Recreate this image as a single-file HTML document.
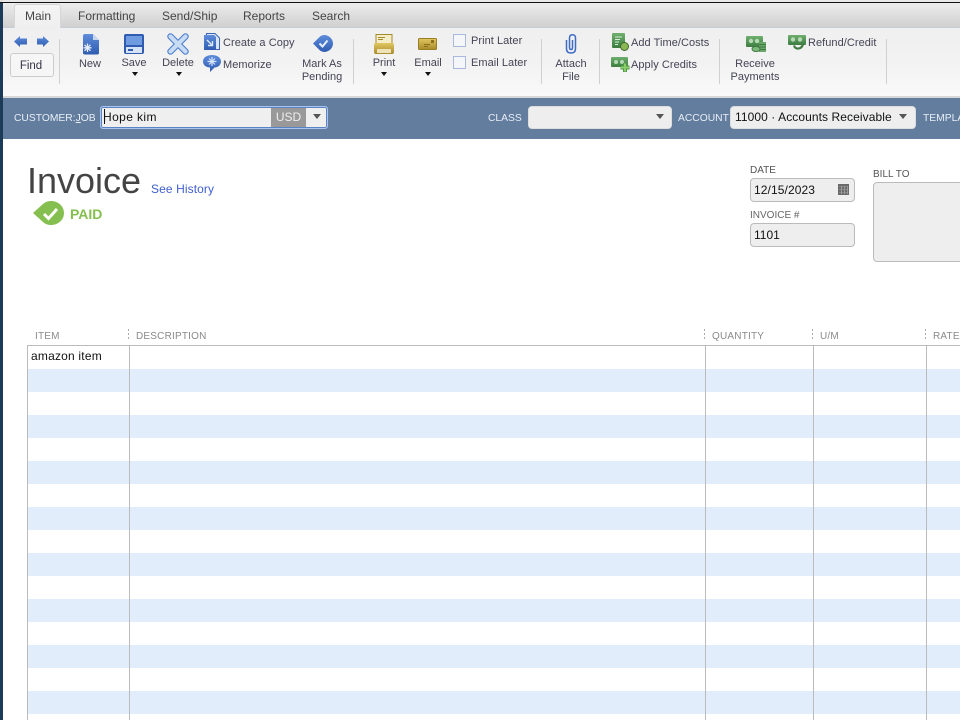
<!DOCTYPE html>
<html><head><meta charset="utf-8"><style>
html,body{margin:0;padding:0;width:960px;height:720px;overflow:hidden;background:#fff;font-family:"Liberation Sans",sans-serif}
#r{position:relative;width:960px;height:720px;overflow:hidden}
.a{position:absolute}
.t{position:absolute;white-space:nowrap;font-size:12px;line-height:14px;color:#445}
.s{font-size:11px;letter-spacing:.05px;color:#445}
.b{font-size:11px;letter-spacing:0;color:#445}
.c{text-align:center}
.tab{position:absolute;top:9px;font-size:12px;line-height:14px;color:#444;white-space:nowrap}
.sep{position:absolute;top:39px;width:1px;height:45px;background:#d0d0d0}
.lbl{position:absolute;top:113px;white-space:nowrap;font-size:10.3px;line-height:12px;color:#e8eef5}
.hd{position:absolute;top:331px;font-size:10px;line-height:12px;color:#8a8a8a;white-space:nowrap;letter-spacing:.2px}
.dots{position:absolute;top:329px;width:1px;height:11px;background:repeating-linear-gradient(#aaa 0 2px,transparent 2px 4px)}
.row{position:absolute;left:28px;width:932px;height:23px;background:#e2edfc}
.col{position:absolute;top:345px;width:1px;height:375px;background:#bbb}
.f{position:absolute;box-sizing:border-box;background:#eee;border:1px solid #bbb;border-radius:4px}
.arr{position:absolute;width:0;height:0;border-left:3px solid transparent;border-right:3px solid transparent;border-top:4px solid #111}
.dd{position:absolute;width:0;height:0;border-left:4px solid transparent;border-right:4px solid transparent;border-top:5px solid #555}
.cb{position:absolute;left:453px;width:11px;height:11px;border:1px solid #aab8dc;background:#f5f6f9}
svg{position:absolute;overflow:visible}
</style></head><body><div id="r">
<svg width="0" height="0" style="left:0;top:0"><defs>
<linearGradient id="bl" x1="0" y1="0" x2="0" y2="1"><stop offset="0" stop-color="#5f8ddb"/><stop offset="1" stop-color="#2f5cb0"/></linearGradient>
<linearGradient id="gr" x1="0" y1="0" x2="0" y2="1"><stop offset="0" stop-color="#6fb06f"/><stop offset="1" stop-color="#3c7c40"/></linearGradient>
<linearGradient id="go" x1="0" y1="0" x2="0" y2="1"><stop offset="0" stop-color="#e2c760"/><stop offset="1" stop-color="#a88a2a"/></linearGradient>
</defs></svg>
<div class="a" style="left:0;top:0;width:960px;height:2px;background:#e8e8e8"></div>
<div class="a" style="left:0;top:2px;width:960px;height:1px;background:#111"></div>
<div class="a" style="left:0;top:3px;width:3px;height:717px;background:#1d3a58"></div>
<div class="a" style="left:0;top:0;width:3px;height:2px;background:#ddd"></div>

<div class="a" style="left:3px;top:3px;width:957px;height:24px;background:linear-gradient(#ececec,#d0d0d0)"></div>
<div class="a" style="left:3px;top:27px;width:957px;height:1px;background:#c3ccd8"></div>
<div class="a" style="left:3px;top:28px;width:957px;height:68px;background:linear-gradient(#efefef,#f3f3f3 60%,#fafafa)"></div>
<div class="a" style="left:3px;top:96px;width:957px;height:2px;background:#d8d8d8"></div>
<div class="a" style="left:14px;top:4px;width:47px;height:24px;box-sizing:border-box;border:1px solid #d6d6d6;border-bottom:0;border-radius:3px 3px 0 0;background:linear-gradient(#f4f4f4,#efefef)"></div>
<div class="tab" style="left:25px">Main</div>
<div class="tab" style="left:78px">Formatting</div>
<div class="tab" style="left:162px">Send/Ship</div>
<div class="tab" style="left:243px">Reports</div>
<div class="tab" style="left:312px">Search</div>

<!-- nav arrows -->
<svg style="left:14px;top:35px" width="14" height="14"><path d="M0 6.500L6 1V3.500H13V9.500H6V12Z" fill="url(#bl)"/></svg>
<svg style="left:36px;top:35px" width="14" height="14"><path d="M13 6.500L7 1V3.500H1V9.500H7V12Z" fill="url(#bl)"/></svg>
<div class="a" style="left:10px;top:53px;width:44px;height:24px;box-sizing:border-box;border:1px solid #ccc;border-radius:3px;background:#f6f6f6"></div>
<div class="t c b" style="left:10px;top:59px;width:42px;font-size:11.5px;color:#334">Find</div>
<div class="sep" style="left:59px"></div>

<!-- New -->
<svg style="left:82px;top:34px" width="18" height="21"><path d="M1 2Q1 0 3 0H11L17 6V19Q17 20.500 15 20.500H3Q1 20.500 1 19Z" fill="url(#bl)"/><path d="M11 0L17 6H11Z" fill="#c6d6f0"/><path d="M5.500 9.500V18M1.500 13.800H9.500M2.500 10.800L8.500 16.800M8.500 10.800L2.500 16.800" stroke="#e4ecfa" stroke-width="1.3"/></svg>
<div class="t c b" style="left:70px;top:57px;width:40px">New</div>
<!-- Save -->
<svg style="left:124px;top:34px" width="20" height="20"><rect x="0" y="0" width="20" height="20" rx="2" fill="#2f5cb0"/><rect x="2" y="2" width="16" height="9" fill="#6f9ce0"/><rect x="2" y="13" width="16" height="6" fill="#d6e3f6"/><rect x="4" y="15" width="5" height="2" fill="#2f5cb0"/></svg>
<div class="t c b" style="left:114px;top:56px;width:40px">Save</div>
<div class="arr" style="left:132px;top:72px"></div>
<!-- Delete -->
<svg style="left:168px;top:34px" width="20" height="20"><path d="M2.500 2.500L17.500 17.500M17.500 2.500L2.500 17.500" stroke="#5080cc" stroke-width="6.500" stroke-linecap="round"/><path d="M2.500 2.500L17.500 17.500M17.500 2.500L2.500 17.500" stroke="#c8dbf5" stroke-width="4.200" stroke-linecap="round"/></svg>
<div class="t c b" style="left:158px;top:56px;width:40px">Delete</div>
<div class="arr" style="left:176px;top:72px"></div>
<!-- Create a copy -->
<svg style="left:204px;top:33px" width="16" height="18"><path d="M2.500 .5H11L15.500 5V16.500H2.500Z" fill="#dbe6f6" stroke="#3a66b4"/><path d="M0 2H10L12 4V17H0Z" fill="url(#bl)"/><path d="M3 7L8 12M8.500 8V12.500H4" stroke="#dce8fa" fill="none" stroke-width="1.400"/></svg>
<div class="t s" style="left:223px;top:36px">Create a Copy</div>
<!-- Memorize -->
<svg style="left:203px;top:55px" width="18" height="18"><path d="M9 0C14 0 18 2.500 18 6.500C18 10 15 12.500 11.500 12.500L7 17V12.500C3 12.500 0 10 0 6.500C0 2.500 4 0 9 0Z" fill="url(#bl)"/><path d="M9 2V11M4.500 6.500H13.500M6 3.500L12 9.500M12 3.500L6 9.500" stroke="#d6e4f8" stroke-width="1.200"/></svg>
<div class="t s" style="left:223px;top:58px">Memorize</div>

<!-- Mark as pending -->
<svg style="left:313px;top:35px" width="20" height="18"><path d="M0 8.500L7 1.500Q9 0 11 0C16 0 20 4 20 8.500C20 13 16 17 11 17Q9 17 7 15.500Z" fill="url(#bl)"/><path d="M6.500 8.500L9.500 11.500L14.500 5.500" stroke="#e6eefb" stroke-width="2" fill="none"/></svg>
<div class="t c b" style="left:297px;top:58px;width:50px;line-height:13px">Mark As<br>Pending</div>
<div class="sep" style="left:353px"></div>

<!-- Print -->
<svg style="left:374px;top:34px" width="20" height="20"><rect x="2" y=".5" width="16" height="9" fill="#f5ecc8" stroke="#a58a2b"/><path d="M4 3.500H11M4 5.500H9" stroke="#a58a2b"/><rect x="0" y="9" width="20" height="11" rx="2" fill="url(#go)"/><rect x="3" y="15" width="14" height="4" fill="#eee2b8"/></svg>
<div class="t c b" style="left:364px;top:56px;width:40px">Print</div>
<div class="arr" style="left:381px;top:72px"></div>
<!-- Email -->
<svg style="left:418px;top:38px" width="19" height="12"><rect x=".5" y=".5" width="18" height="11" rx="1" fill="url(#go)" stroke="#9a7f22"/><path d="M6 6.500H12M6 8.500H10" stroke="#8a701c"/><rect x="13" y="2" width="3" height="3" fill="#8a701c"/></svg>
<div class="t c b" style="left:408px;top:56px;width:40px">Email</div>
<div class="arr" style="left:425px;top:72px"></div>
<div class="cb" style="top:34px"></div>
<div class="t s" style="left:471px;top:34px">Print Later</div>
<div class="cb" style="top:56px"></div>
<div class="t s" style="left:471px;top:56px">Email Later</div>
<div class="sep" style="left:541px"></div>

<!-- Attach -->
<svg style="left:565px;top:34px" width="13" height="20"><path d="M1.500 6V14.500Q1.500 19 6 19T10.500 14.500V4Q10.500 .8 7.500 .8T4.500 4V13.500Q4.500 15.500 6 15.500T7.500 13.500V6" fill="none" stroke="#3e6cc4" stroke-width="1.500"/></svg>
<div class="t c b" style="left:551px;top:58px;width:40px;line-height:13px">Attach<br>File</div>
<div class="sep" style="left:599px"></div>

<!-- Add time -->
<svg style="left:612px;top:33px" width="17" height="18"><rect x="0" y="0" width="13" height="15" rx="1" fill="url(#gr)"/><path d="M3 4H10M3 6.500H8M3 9H7M3 11.500H6" stroke="#d6ecd6"/><circle cx="12.500" cy="13.500" r="4" fill="#8ab654" stroke="#3d6a2a"/></svg>
<div class="t s" style="left:631px;top:36px">Add Time/Costs</div>
<!-- Apply credits -->
<svg style="left:611px;top:57px" width="19" height="16"><rect x="0" y="0" width="17" height="10" rx="1" fill="url(#gr)"/><circle cx="5" cy="5" r="2" fill="#b5dab5"/><circle cx="11" cy="5" r="2" fill="#b5dab5"/><path d="M14 6V15M9.500 10.500H18.500" stroke="#4e9a44" stroke-width="4"/><path d="M14 6.500V14.500M10 10.500H18" stroke="#8ccc6a" stroke-width="2"/></svg>
<div class="t s" style="left:631px;top:58px">Apply Credits</div>
<div class="sep" style="left:719px"></div>

<!-- Receive -->
<svg style="left:746px;top:36px" width="20" height="17"><rect x="0" y="0" width="17" height="11" rx="1" fill="url(#gr)"/><circle cx="5" cy="5" r="2.200" fill="#b5dab5"/><circle cx="11" cy="5" r="2.200" fill="#b5dab5"/><rect x="13" y="6" width="7" height="10" fill="#6aa66a"/><path d="M13 8.500H20M13 11H20M13 13.500H20" stroke="#3f7a3f"/><ellipse cx="10" cy="13" rx="4" ry="2.500" fill="#7db87d" stroke="#3f7a3f"/></svg>
<div class="t c b" style="left:725px;top:58px;width:60px;line-height:13px">Receive<br>Payments</div>
<!-- Refund -->
<svg style="left:788px;top:35px" width="18" height="16"><rect x="0" y="0" width="18" height="10" rx="1" fill="url(#gr)"/><circle cx="5" cy="4.500" r="2.200" fill="#b5dab5"/><circle cx="12" cy="4.500" r="2.200" fill="#b5dab5"/><path d="M6 10.500C7 14.500 13 15 15 9.500" stroke="#3f7a3f" stroke-width="2.200" fill="none"/></svg>
<div class="t s" style="left:808px;top:36px">Refund/Credit</div>
<div class="sep" style="left:886px"></div>

<!-- blue bar -->
<div class="a" style="left:3px;top:98px;width:957px;height:41px;background:#627d9e"></div>
<div class="lbl" style="left:14px">CUSTOMER:<span style="text-decoration:underline">J</span>OB</div>
<div class="a" style="left:100px;top:106px;width:228px;height:23px;box-sizing:border-box;border:1px solid #a9c4ee;border-radius:3px;background:#efefef;box-shadow:0 0 0 1px #5b83c4 inset"></div>
<div class="a" style="left:104px;top:109px;width:1px;height:15px;background:#111"></div>
<div class="t" style="left:103px;top:110px;color:#111;font-size:12px;letter-spacing:.4px">Hope kim</div>
<div class="a" style="left:271px;top:108px;width:35px;height:19px;background:#999"></div>
<div class="t c" style="left:271px;top:110px;width:35px;color:#eee">USD</div>
<div class="dd" style="left:313px;top:114px"></div>

<div class="lbl" style="left:488px">CLASS</div>
<div class="f" style="left:528px;top:106px;width:144px;height:23px;border-color:#ddd"></div>
<div class="dd" style="left:656px;top:114px"></div>
<div class="lbl" style="left:678px">ACCOUNT</div>
<div class="f" style="left:730px;top:106px;width:186px;height:23px;border-color:#ddd"></div>
<div class="t" style="left:735px;top:110px;color:#111;letter-spacing:.08px">11000 · Accounts Receivable</div>
<div class="dd" style="left:899px;top:114px"></div>
<div class="lbl" style="left:923px">TEMPLATE</div>

<!-- header -->
<div class="t" style="left:27px;top:160px;font-size:36px;line-height:42px;color:#444">Invoice</div>
<div class="t" style="left:151px;top:182px;color:#3f5fcf;letter-spacing:.1px">See History</div>
<svg style="left:33px;top:201px" width="32" height="24"><path d="M0 12L10 3Q13 0 18 0C25 0 31 5 31 12C31 19 25 24 18 24Q13 24 10 21Z" fill="#85bf4f"/><path d="M11 13L15.500 17.500L24 8" stroke="#fff" stroke-width="3" fill="none"/></svg>
<div class="t" style="left:70px;top:207px;font-size:14px;font-weight:bold;color:#85bf4f">PAID</div>

<div class="t" style="left:750px;top:165px;font-size:10px;line-height:12px;color:#555">DATE</div>
<div class="f" style="left:750px;top:178px;width:105px;height:24px"></div>
<div class="t" style="left:754px;top:183px;color:#111;letter-spacing:.1px">12/15/2023</div>
<div class="a" style="left:838px;top:184px;width:11px;height:11px;background:#6a6a6a"></div>
<div class="a" style="left:839px;top:186px;width:9px;height:8px;background:repeating-linear-gradient(90deg,transparent 0 2px,#999 2px 3px),repeating-linear-gradient(#888 0 1px,transparent 1px 3px)"></div>
<div class="t" style="left:750px;top:210px;font-size:10px;line-height:12px;color:#666">INVOICE #</div>
<div class="f" style="left:750px;top:223px;width:105px;height:24px"></div>
<div class="t" style="left:754px;top:228px;color:#111">1101</div>
<div class="t" style="left:873px;top:169px;font-size:10px;line-height:12px;color:#555">BILL TO</div>
<div class="f" style="left:873px;top:182px;width:100px;height:80px"></div>

<!-- table -->
<div class="hd" style="left:35px">ITEM</div>
<div class="hd" style="left:136px">DESCRIPTION</div>
<div class="hd" style="left:712px">QUANTITY</div>
<div class="hd" style="left:820px">U/M</div>
<div class="hd" style="left:933px">RATE</div>
<div class="dots" style="left:128px"></div>
<div class="dots" style="left:704px"></div>
<div class="dots" style="left:812px"></div>
<div class="dots" style="left:925px"></div>
<div class="row" style="top:369px"></div>
<div class="row" style="top:415px"></div>
<div class="row" style="top:461px"></div>
<div class="row" style="top:507px"></div>
<div class="row" style="top:553px"></div>
<div class="row" style="top:599px"></div>
<div class="row" style="top:645px"></div>
<div class="row" style="top:691px"></div>
<div class="a" style="left:27px;top:345px;width:933px;height:1px;background:#bbb"></div>
<div class="col" style="left:27px"></div>
<div class="col" style="left:129px"></div>
<div class="col" style="left:705px"></div>
<div class="col" style="left:813px"></div>
<div class="col" style="left:926px"></div>
<div class="t" style="left:31px;top:349px;color:#111;letter-spacing:.2px">amazon item</div>
</div></body></html>
